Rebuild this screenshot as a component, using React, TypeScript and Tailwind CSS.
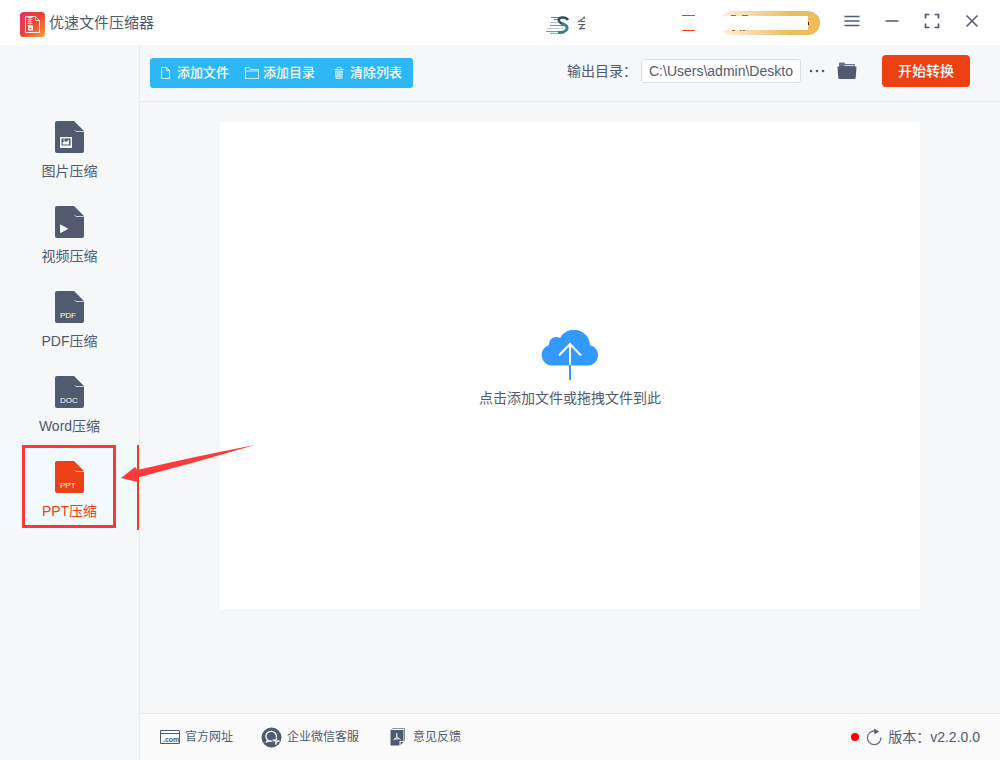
import React from "react";

interface IFileIcon {
  label?: string;
  kind?: "image" | "video";
}

const FileIcon: React.FC<IFileIcon> = ({ label, kind }) => (
  <svg width="29" height="32" viewBox="0 0 29 32" fill="currentColor" aria-hidden="true">
    <path d="M2 0H19L29 10V30a2 2 0 0 1-2 2H2a2 2 0 0 1-2-2V2a2 2 0 0 1 2-2Z" />
    <path d="M19.500 9l1.500 1.500H29" fill="none" stroke="#fff" strokeOpacity=".7" strokeWidth="1" />
    {kind === "image" && (
      <g>
        <path d="M5 16h12v11H5Z" fill="#f5f7fa" />
        <path d="M6.500 17.500h9v7h-9Z" />
        <path d="M7.500 23.500v-2l2-1.500 1.500 1 3-2.500v5Z" fill="#f5f7fa" />
        <circle cx="9" cy="19" r=".8" fill="#f5f7fa" />
      </g>
    )}
    {kind === "video" && <path d="M5.500 19l7 3.800-7 3.700Z" fill="#fff" stroke="#fff" strokeLinejoin="round" />}
    {label && (
      <text x="5" y="27" fontSize="8" fill="#fff" fontFamily="Liberation Sans, sans-serif">{label}</text>
    )}
  </svg>
);

const Folder = () => (
  <svg width="20" height="18" viewBox="0 0 20 18" fill="#515a6e" aria-hidden="true">
    <path d="M2 5V1.500Q2 .5 3 .5h4l1.500 1.500H17q1 0 1 1V5Z" fillOpacity=".85" />
    <path d="M7.500 3.500h10" stroke="#f5f7f9" strokeWidth=".7" />
    <path d="M.5 4.500h19L18.700 16q-.1 1-1.200 1h-15q-1.100 0-1.200-1Z" />
  </svg>
);

const items: { text: string; label?: string; kind?: "image" | "video"; active?: boolean }[] = [
  { text: "图片压缩", kind: "image" },
  { text: "视频压缩", kind: "video" },
  { text: "PDF压缩", label: "PDF" },
  { text: "Word压缩", label: "DOC" },
  { text: "PPT压缩", label: "PPT", active: true },
];

const Header = () => (
  <header className="flex h-[45px] items-center bg-white pl-5 pr-2">
    <svg className="mt-1 shrink-0" width="25" height="25" viewBox="0 0 25 25" fill="none" aria-hidden="true">
      <defs>
        <linearGradient id="logo" x1="0" y1="0" x2="1" y2="1">
          <stop offset="0" stopColor="#e62e63" />
          <stop offset=".5" stopColor="#e94435" />
          <stop offset="1" stopColor="#f5a33b" />
        </linearGradient>
      </defs>
      <rect width="25" height="25" rx="3.500" fill="url(#logo)" />
      <path d="M5.500 4.500h10l4 4V20.500h-14Z" stroke="#fff" strokeOpacity=".85" />
      <path d="M15.500 4.500v4h4" stroke="#fff" strokeOpacity=".85" />
      <path d="M7.500 5.500h5M7.500 7.500h5M7.500 9.500h5M7.500 11.500h5M7.500 13.500h5" stroke="#fff" strokeOpacity=".8" />
      <path d="M10 5v9" stroke="#fff" strokeOpacity=".6" />
      <path d="M8 14h5v4.500H8Z" fill="#fff" />
      <path d="M9.500 16.500h2" stroke="#e94435" />
    </svg>
    <h1 className="ml-1 text-[15px] leading-5 text-[#515a6e]">优速文件压缩器</h1>

    <div className="ml-auto flex items-center">
      <svg className="mt-1" width="24" height="18" viewBox="0 0 24 18" fill="none" aria-hidden="true">
        <path d="M1 12.500h13M4 6.500h9" stroke="#b8c6cb" />
        <path d="M5 1.500h13M8 3.500h6" stroke="#6d8088" />
        <path d="M4 9.500h14" stroke="#7f969e" />
        <path d="M0 15.500h17M4 17.300h14" stroke="#68a5a8" />
        <path d="M22 4Q20 1 16 1.500q-4 .5-3 3.500 1 2 4.500 3.500" stroke="#33505d" strokeWidth="2.600" />
        <path d="M16 7.500q6 2 5 5.500-1.500 3.500-9 3.500" stroke="#3f8088" strokeWidth="3" />
        <path d="M18 10.500q-1 2.500-6 2" stroke="#d7e3e5" />
      </svg>
      <span className="relative ml-[7px] w-[14px] text-sm leading-[14px] text-[#515a6e]">
        会
        <span className="absolute -top-1 left-2 h-6 w-3 bg-white" />
      </span>
      <span className="ml-[91px] mt-px h-4 w-[13px] border-y border-[#ed4014]" />
      <div className="ml-[25px] mr-3 flex h-6 w-[100px] items-center rounded-full bg-linear-to-r from-[#fdf1dc] to-[#edbc5e] to-70%">
        <svg width="89" height="16" viewBox="0 0 89 16" aria-hidden="true">
          <path d="M0 1h88v14H0Z" fill="#fff" />
          <path d="M11 .5h5M22 .5h6M12 15.500h3M20 15.500h2M23 15.500h2" stroke="#6b3a16" strokeOpacity=".7" />
          <path d="M88 7h1v3h-1Z" fill="#4d2508" />
        </svg>
      </div>
      <div className="flex pb-[3px]">
        <button aria-label="菜单" className="flex size-10 items-center justify-center">
          <svg width="16" height="12" viewBox="0 0 16 12" stroke="#515a6e" strokeWidth="1.400"><path d="M.5 1.500h15M.5 6h15M.5 10.500h15" /></svg>
        </button>
        <button aria-label="最小化" className="flex size-10 items-center justify-center">
          <svg width="14" height="2" viewBox="0 0 14 2" stroke="#515a6e" strokeWidth="1.500"><path d="M.5 1h13" /></svg>
        </button>
        <button aria-label="最大化" className="flex size-10 items-center justify-center">
          <svg width="16" height="16" viewBox="0 0 16 16" fill="none" stroke="#515a6e" strokeWidth="1.700">
            <path d="M1.500 5.500v-4h4M10.500 1.500h4v4M14.500 10.500v4h-4M5.500 14.500h-4v-4" />
          </svg>
        </button>
        <button aria-label="关闭" className="flex size-10 items-center justify-center">
          <svg width="12" height="12" viewBox="0 0 12 12" stroke="#515a6e" strokeWidth="1.500"><path d="M.5.5l11 11M11.500.5l-11 11" /></svg>
        </button>
      </div>
    </div>
  </header>
);

const Sidebar = () => (
  <nav className="relative z-10 w-[140px] shrink-0 border-r border-[#e8eaec] pt-[60px]">
    {items.map((item) => (
      <div key={item.text} className="relative">
        <button
          className={
            item.active
              ? "flex h-[85px] w-full flex-col items-center border-r-2 border-[#ed4014] bg-[#f0faff] pl-0.5 pt-4 text-[#ed4014]"
              : "flex h-[85px] w-full flex-col items-center pt-4 text-[#515a6e]"
          }
        >
          <FileIcon label={item.label} kind={item.kind} />
          <span className="mt-2 text-sm leading-5">{item.text}</span>
        </button>
        {item.active && (
          <>
            <div className="pointer-events-none absolute left-[22px] top-0 h-[83px] w-[94px] border-3 border-[#fd3737]" />
            <svg className="pointer-events-none absolute left-[121px] top-0" width="136" height="40" viewBox="0 0 136 40" aria-hidden="true">
              <path d="M0 33L14 22l2.500 3Q76 11 134 0 76 17 17 32.500L16.500 37Z" fill="#fd3a3a" />
            </svg>
          </>
        )}
      </div>
    ))}
  </nav>
);

const Toolbar = () => (
  <div className="flex h-[57px] items-center border-b border-[#e8eaec] pl-[10px] pr-[30px]">
    <div className="flex h-[30px] items-center rounded-[3px] bg-[#2db7f5] text-[13px] font-medium text-white">
      <button className="flex h-full items-center gap-[7px] pl-[11px] pr-2">
        <svg width="9" height="12" viewBox="0 0 9 12" fill="none" stroke="#fff" strokeOpacity=".8"><path d="M.5.5h5l3 3v8h-8ZM5.500.5v3h3" /></svg>
        添加文件
      </button>
      <button className="flex h-full items-center gap-1 px-2">
        <svg width="14" height="12" viewBox="0 0 14 12" fill="none" stroke="#fff" strokeOpacity=".75"><path d="M.5 11.500V.5h4l1 2h8v9ZM.5 4h13" /></svg>
        添加目录
      </button>
      <button className="flex h-full items-center gap-1.5 px-[11px]">
        <svg width="10" height="12" viewBox="0 0 10 12" fill="none" stroke="#fff" strokeOpacity=".6">
          <path d="M0 2.500h10M3 2.500v-2h4v2" />
          <path d="M1.500 4h7l-.5 7.500H2Z" fill="#fff" fillOpacity=".4" />
          <path d="M4 5v5M6 5v5" />
        </svg>
        清除列表
      </button>
    </div>
    <div className="mb-1 ml-auto flex items-center">
      <label htmlFor="output" className="text-sm leading-5 text-[#515a6e]">输出目录：</label>
      <input
        id="output"
        defaultValue="C:\Users\admin\Deskto"
        className="ml-1 h-6 w-40 rounded-[3px] border border-[#dcdee2] bg-white px-[7px] text-sm text-[#515a6e]"
      />
      <button aria-label="更多" className="ml-2">
        <svg width="16" height="4" viewBox="0 0 16 4" fill="#515a6e"><circle cx="2" cy="2" r="1.300" /><circle cx="8" cy="2" r="1.300" /><circle cx="14" cy="2" r="1.300" /></svg>
      </button>
      <button aria-label="打开目录" className="ml-3"><Folder /></button>
      <button className="ml-[25px] h-8 w-[88px] rounded bg-[#ed4014] text-sm font-medium text-white">开始转换</button>
    </div>
  </div>
);

const Footer = () => (
  <footer className="flex h-[47px] items-center border-t border-[#e8eaec] bg-[#fafafa] px-5 text-xs text-[#515a6e]">
    <a href="#site" className="flex items-center gap-[5px]">
      <svg width="20" height="16" viewBox="0 0 20 16" fill="none" stroke="#515a6e" aria-hidden="true">
        <path d="M.5 1.500h19v13H.5ZM.5 4.500h19" />
        <text x="3" y="13" fontSize="7" fontWeight="bold" fill="#515a6e" stroke="none" fontFamily="Liberation Sans, sans-serif">.com</text>
      </svg>
      官方网址
    </a>
    <a href="#service" className="ml-7 flex items-center gap-[5px]">
      <svg width="21" height="21" viewBox="0 0 21 21" fill="none" aria-hidden="true">
        <circle cx="10.500" cy="10.500" r="10" fill="#515a6e" />
        <path d="M15.300 10.500A5.300 4.900 0 1 0 11.500 14M6.500 12.800L5.500 15l3-1" stroke="#fff" strokeWidth="1.300" />
        <path d="M12.500 13l2 1M15.500 11.500l-.5 1.500M16 14.500l2-.5M15 15.500v1.500" stroke="#fff" strokeWidth="1.500" strokeLinecap="round" />
      </svg>
      企业微信客服
    </a>
    <a href="#feedback" className="ml-[31px] flex items-center gap-2">
      <svg width="15" height="18" viewBox="0 0 15 18" fill="none" aria-hidden="true">
        <path d="M1.500 1.500L3 .5h11.500v12l-1 1" stroke="#8b919e" />
        <path d="M.5 2h13v11h-4v4.500h-9Z" fill="#515a6e" />
        <path d="M10.500 17v-3h3Z" fill="#515a6e" />
        <path d="M6.800 5v4l-3.300 3M6.800 9l3.700 2.500M4.500 11h4" stroke="#fff" />
      </svg>
      意见反馈
    </a>
    <div className="ml-auto flex items-center pb-px text-sm">
      <span className="size-2 rounded-full bg-[#f00]" />
      <svg className="ml-[7px] mr-1.5" width="16" height="18" viewBox="0 0 16 18" fill="none" aria-hidden="true">
        <path d="M8.500 3A6.800 6.800 0 1 0 15 9.500" stroke="#69707f" strokeWidth="1.300" />
        <path d="M8 .5l5 3-4.500 3Z" fill="#515a6e" />
      </svg>
      版本：v2.2.0.0
    </div>
  </footer>
);

const App: React.FC = () => {
  return (
    <div className="flex min-h-screen flex-col bg-[#f5f7f9] font-['Liberation_Sans','Noto_Sans_CJK_SC',sans-serif]">
      <Header />
      <div className="flex flex-1">
        <Sidebar />
        <main className="flex min-w-0 flex-1 flex-col">
          <Toolbar />
          <button className="mx-20 mb-[104px] mt-5 flex flex-1 flex-col items-center justify-center gap-2 bg-white pt-1.5 text-sm leading-5 text-[#515a6e]">
            <svg width="58" height="50" viewBox="0 0 58 50" fill="none" aria-hidden="true">
              <path d="M10.500 35.500A10.500 10.500 0 0 1 8 15Q8 7.500 15 7q2-.1 4 1A16 16 0 0 1 49 15a10.400 10.400 0 0 1-1.500 20.500Z" fill="#3399ff" />
              <path d="M29 35v15" stroke="#3399ff" strokeWidth="2" />
              <path d="M29 35V14M18 25.500L29 14l11 11.500" stroke="#fff" strokeWidth="2" />
            </svg>
            点击添加文件或拖拽文件到此
          </button>
          <Footer />
        </main>
      </div>
    </div>
  );
};

export default App;
